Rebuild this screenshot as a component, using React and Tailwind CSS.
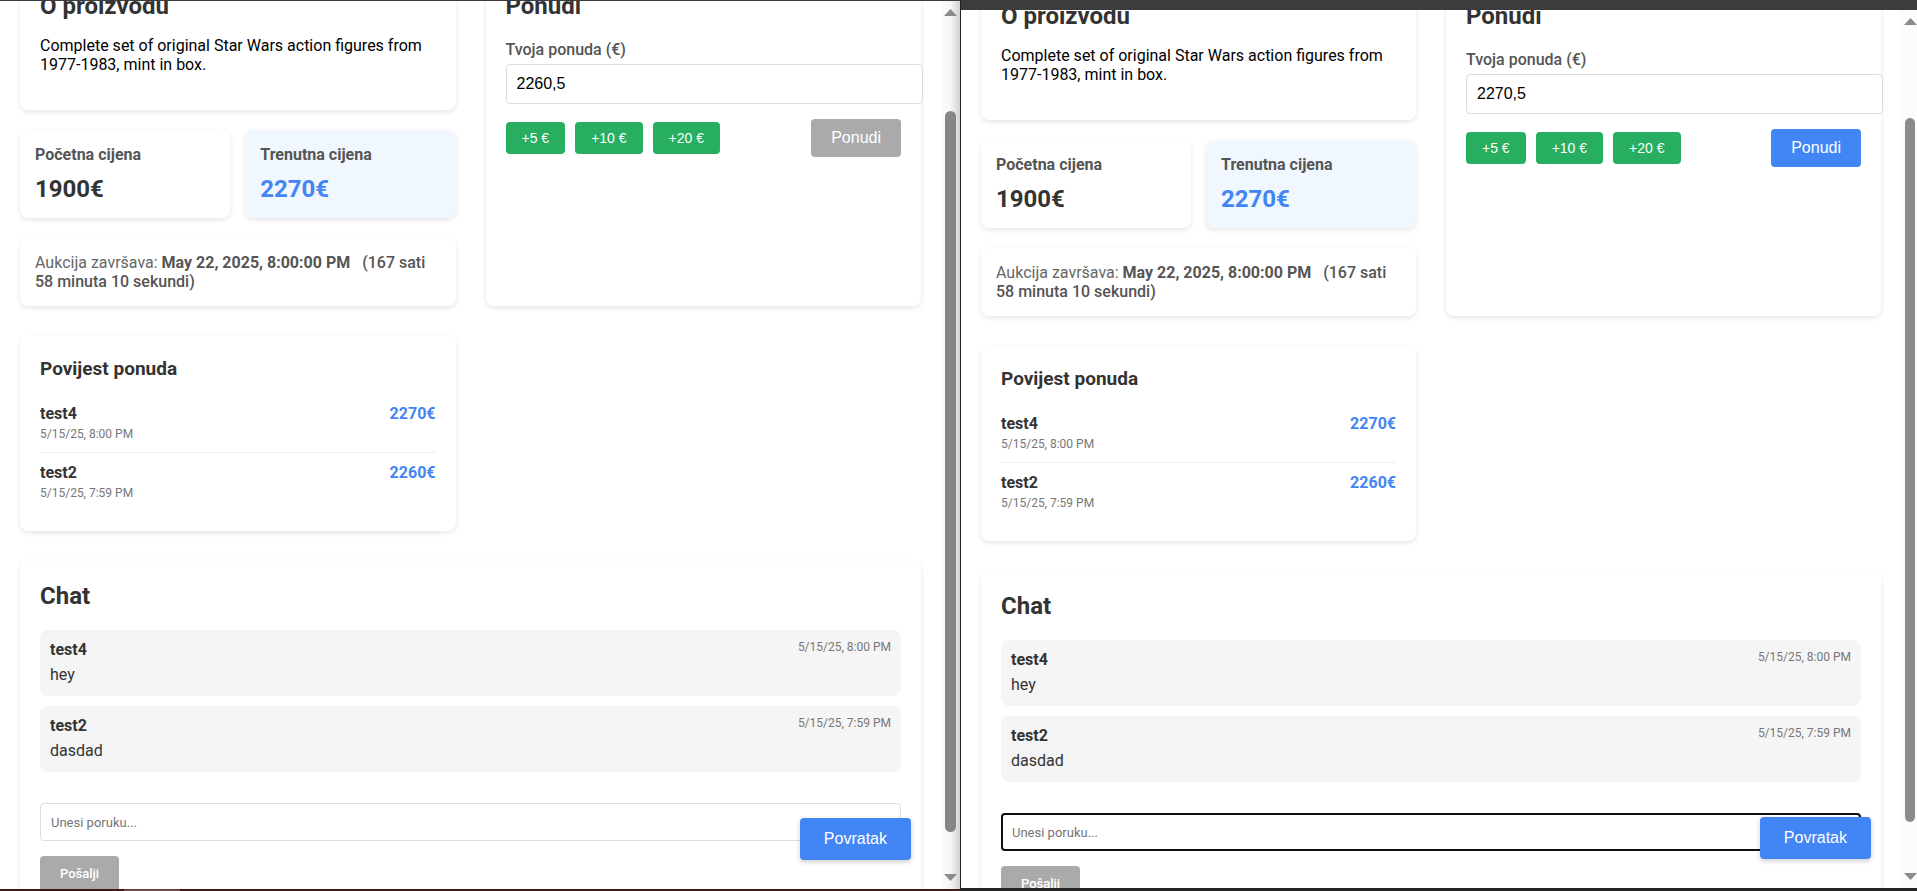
import { useId } from "react";

const CARD = "rounded-lg bg-white shadow-[0_2px_5px_rgba(0,0,0,0.1)]";

const bids = [
  { user: "test4", time: "5/15/25, 8:00 PM", amount: "2270€" },
  { user: "test2", time: "5/15/25, 7:59 PM", amount: "2260€" },
];

const messages = [
  { user: "test4", time: "5/15/25, 8:00 PM", text: "hey" },
  { user: "test2", time: "5/15/25, 7:59 PM", text: "dasdad" },
];

function Heading({ children }) {
  return <h2 className="text-2xl leading-[30px] font-bold text-[#333]">{children}</h2>;
}

function PriceCard({ label, value, current }) {
  return (
    <div
      className={
        current
          ? "rounded-lg bg-[#f0f7ff] p-[15px] shadow-[0_2px_5px_rgba(0,0,0,0.1)]"
          : "rounded-lg bg-white p-[15px] shadow-[0_2px_5px_rgba(0,0,0,0.1)]"
      }
    >
      <h3 className="mb-[11px] text-base leading-[19px] font-bold text-[#555]">{label}</h3>
      <p
        className={
          current
            ? "text-2xl leading-7 font-bold text-[#4285f4]"
            : "text-2xl leading-7 font-bold text-[#333]"
        }
      >
        {value}
      </p>
    </div>
  );
}

function BidForm({ value, enabled }) {
  const id = useId();
  return (
    <form className={`${CARD} min-w-0 p-5`} onSubmit={(e) => e.preventDefault()}>
      <Heading>Ponudi</Heading>
      <label htmlFor={id} className="mt-[19px] block text-base leading-[19px] font-medium text-[#555]">
        Tvoja ponuda (€)
      </label>
      <input
        id={id}
        type="text"
        inputMode="decimal"
        defaultValue={value}
        className="mt-[5px] block h-10 w-[calc(100%+22px)] rounded border border-[#ddd] bg-white px-[10px] font-['Liberation_Sans',sans-serif] text-base text-black"
      />
      <div className="mt-[15px] flex items-center gap-[10px] font-['Liberation_Sans',sans-serif] text-white">
        {["+5 €", "+10 €", "+20 €"].map((step) => (
          <button key={step} type="button" className="h-8 rounded bg-[#27ae60] px-4 text-sm leading-4">
            {step}
          </button>
        ))}
        <button
          type="submit"
          disabled={!enabled}
          className="ml-auto h-[38px] rounded bg-[#4285f4] px-5 text-base leading-[18px] disabled:bg-[#aaa]"
        >
          Ponudi
        </button>
      </div>
    </form>
  );
}

function History() {
  return (
    <section className={`${CARD} w-[calc(50%-15px)] p-5`}>
      <h3 className="mb-[13px] text-[19px] leading-[25px] font-bold text-[#333]">Povijest ponuda</h3>
      <ul>
        {bids.map((bid) => (
          <li
            key={bid.user}
            className="flex justify-between border-b border-[#eee] py-[10px] text-base leading-[19px] font-bold last:border-b-0"
          >
            <div>
              <p className="text-[#333]">{bid.user}</p>
              <p className="mt-[3px] text-xs leading-4 font-normal text-[#777]">{bid.time}</p>
            </div>
            <p className="text-[#4285f4]">{bid.amount}</p>
          </li>
        ))}
      </ul>
    </section>
  );
}

function Chat({ focused }) {
  return (
    <section className={`${CARD} p-5`}>
      <Heading>Chat</Heading>
      <div className="mt-[19px] flex flex-col gap-[10px]">
        {messages.map((m) => (
          <article key={m.user} className="flex justify-between rounded-lg bg-[#f5f5f5] p-[10px] text-[#333]">
            <div>
              <p className="mb-1 text-base leading-[19px] font-bold">{m.user}</p>
              <p className="text-base leading-[23px]">{m.text}</p>
            </div>
            <time className="text-xs leading-[14px] text-[#777]">{m.time}</time>
          </article>
        ))}
      </div>
      <form className="mt-[31px]" onSubmit={(e) => e.preventDefault()}>
        <input
          type="text"
          aria-label="Poruka"
          placeholder="Unesi poruku..."
          className={
            focused
              ? "block h-[38px] w-full rounded border-2 border-[#101010] bg-white px-[9px] text-[13px] placeholder:text-[#757575]"
              : "block h-[38px] w-full rounded border border-[#ddd] bg-white px-[10px] text-[13px] placeholder:text-[#757575]"
          }
        />
        <button
          type="submit"
          disabled
          className="mt-[15px] h-9 rounded bg-[#aaa] px-5 text-[13px] leading-4 font-medium text-white"
        >
          Pošalji
        </button>
      </form>
    </section>
  );
}

function Auction({ bid, enabled, focused, scrolled }) {
  return (
    <div className="relative min-w-0 flex-1 overflow-hidden">
      <main className={`${scrolled} flex flex-col gap-[30px] px-5 pb-5`}>
        <div className="grid grid-cols-2 gap-[30px]">
          <div className="flex min-w-0 flex-col gap-5">
            <section className={`${CARD} px-5 pt-5 pb-9`}>
              <Heading>O proizvodu</Heading>
              <p className="mt-[15px] text-base leading-[19px] text-black">
                Complete set of original Star Wars action figures from 1977-1983, mint in box.
              </p>
            </section>
            <div className="grid grid-cols-2 gap-[15px]">
              <PriceCard label="Početna cijena" value="1900€" />
              <PriceCard label="Trenutna cijena" value="2270€" current />
            </div>
            <p className={`${CARD} p-[15px] text-base leading-[19px] text-[#666]`}>
              Aukcija završava: <strong className="font-bold text-[#555]">May 22, 2025, 8:00:00 PM</strong>
              <span className="ml-2 font-medium text-[#555]"> (167 sati 58 minuta 10 sekundi)</span>
            </p>
          </div>
          <BidForm value={bid} enabled={enabled} />
        </div>
        <History />
        <Chat focused={focused} />
      </main>
      <button
        type="button"
        className="absolute right-[30px] bottom-[29px] h-[42px] rounded bg-[#4285f4] px-6 font-['Liberation_Sans',sans-serif] text-base leading-[18px] text-white shadow-[0_2px_5px_rgba(0,0,0,0.2)]"
      >
        Povratak
      </button>
    </div>
  );
}

function Arrow({ down }) {
  return (
    <svg viewBox="0 0 13 7" className="h-[7px] w-[13px] shrink-0" fill="#8b8b8b" aria-hidden="true">
      <path d={down ? "M0 0H13L6.5 7Z" : "M0 7H13L6.5 0Z"} />
    </svg>
  );
}

export default function App() {
  return (
    <div className="grid h-screen grid-cols-[961fr_956fr] grid-rows-1 overflow-hidden bg-white font-[Roboto,sans-serif]">
      <div className="flex min-h-0 min-w-0 flex-col border-r border-[#222]">
        <div className="h-px shrink-0 bg-[#3c3c3c]" />
        <div className="flex min-h-0 flex-1">
          <Auction bid="2260,5" enabled={false} focused={false} scrolled="-mt-[30px]" />
          <div className="flex w-[19px] flex-col items-center bg-linear-to-r from-[#fcfcfc] via-[#f6f6f6] to-[#d2d2d2] py-2">
            <Arrow />
            <div className="flex-[95]" />
            <div className="w-[11px] flex-[722] rounded-full bg-[#868686]" />
            <div className="flex-[42]" />
            <Arrow down />
          </div>
        </div>
        <div className="flex h-[2px] shrink-0 bg-[#43161b]">
          <div className="ml-[124px] w-14 bg-[#6f474b]" />
        </div>
      </div>
      <div className="flex min-h-0 min-w-0 flex-col">
        <div className="h-[10px] shrink-0 bg-[#3c3c3c]" />
        <div className="flex min-h-0 flex-1">
          <Auction bid="2270,5" enabled focused scrolled="-mt-[29px]" />
          <div className="flex w-4 flex-col items-end bg-[#fcfcfc] py-2">
            <Arrow />
            <div className="flex-[93]" />
            <div className="mr-[2px] w-[10px] flex-[705] rounded-full bg-[#8b8b8b]" />
            <div className="flex-[51]" />
            <Arrow down />
          </div>
        </div>
        <div className="h-[3px] shrink-0 bg-[#232526]" />
      </div>
    </div>
  );
}
